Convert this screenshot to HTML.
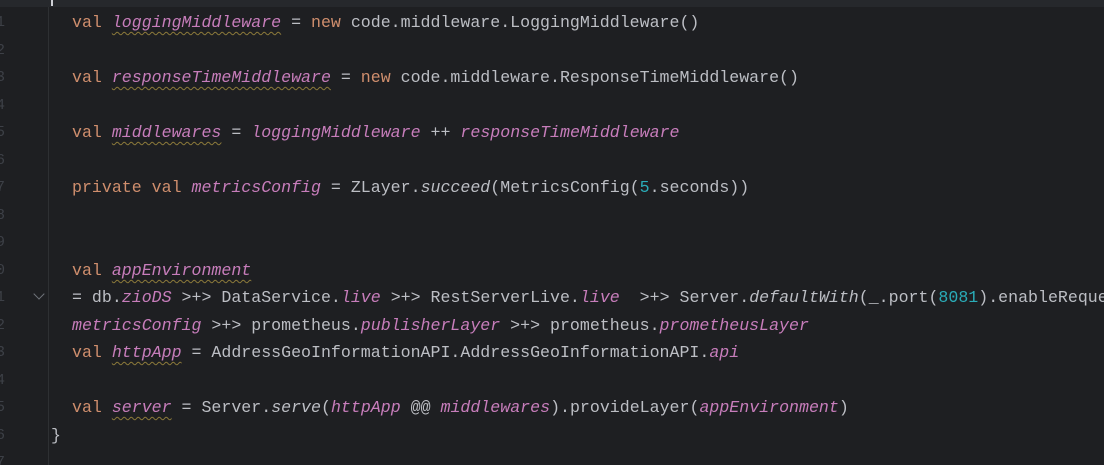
<!DOCTYPE html>
<html><head><style>
html,body{margin:0;padding:0;width:1104px;height:465px;overflow:hidden;background:#1e1f22;}
.wrap{position:absolute;left:0;top:0;width:1104px;height:465px;overflow:hidden;}
.top{position:absolute;left:0;top:0;width:1104px;height:7px;background:#26282c;}
.cur{position:absolute;left:51px;top:0;width:2px;height:6px;background:#ced0d6;}
.gl{position:absolute;left:48px;top:7px;width:1px;height:458px;background:#2e3033;}
.code{position:absolute;left:72px;top:2px;width:1032px;height:463px;overflow:hidden;font-family:"Liberation Mono",monospace;font-size:16.6px;color:#bcbec4;white-space:pre;}
.l{position:absolute;left:0;height:27.5px;line-height:27.5px;}
.k{color:#cf8e6d}
.p{color:#c77dbb;font-style:italic}
.i{font-style:italic}
.n{color:#2aacb8}
.u{text-decoration:underline wavy #8c7a3a;text-decoration-thickness:1px;text-underline-offset:4px}
.ln{position:absolute;left:-7px;font-family:"Liberation Mono",monospace;font-size:15px;color:#3d4047;width:12px;text-align:right;line-height:27.5px}
.chev{position:absolute;left:35px;top:290px;width:7px;height:7px;border-right:1.3px solid #6f737a;border-bottom:1.3px solid #6f737a;transform:rotate(45deg);}
</style></head><body><div class="wrap">
<div class="top"></div><div class="cur"></div><div class="gl"></div>
<div class="ln" style="top:9px">1</div>
<div class="ln" style="top:37px">2</div>
<div class="ln" style="top:64px">3</div>
<div class="ln" style="top:92px">4</div>
<div class="ln" style="top:119px">5</div>
<div class="ln" style="top:147px">6</div>
<div class="ln" style="top:174px">7</div>
<div class="ln" style="top:202px">8</div>
<div class="ln" style="top:229px">9</div>
<div class="ln" style="top:257px">0</div>
<div class="ln" style="top:284px">1</div>
<div class="ln" style="top:312px">2</div>
<div class="ln" style="top:339px">3</div>
<div class="ln" style="top:367px">4</div>
<div class="ln" style="top:394px">5</div>
<div class="ln" style="top:422px">6</div>
<div class="ln" style="top:449px">7</div>
<div class="chev"></div>
<div class="code">
<div class="l" style="top:7px"><span class="k">val</span> <span class="p u">loggingMiddleware</span> = <span class="k">new</span> code.middleware.LoggingMiddleware()</div>
<div class="l" style="top:62px"><span class="k">val</span> <span class="p u">responseTimeMiddleware</span> = <span class="k">new</span> code.middleware.ResponseTimeMiddleware()</div>
<div class="l" style="top:117px"><span class="k">val</span> <span class="p u">middlewares</span> = <span class="p">loggingMiddleware</span> ++ <span class="p">responseTimeMiddleware</span></div>
<div class="l" style="top:172px"><span class="k">private val</span> <span class="p">metricsConfig</span> = ZLayer.<span class="i">succeed</span>(MetricsConfig(<span class="n">5</span>.seconds))</div>
<div class="l" style="top:255px"><span class="k">val</span> <span class="p u">appEnvironment</span></div>
<div class="l" style="top:282px">= db.<span class="p">zioDS</span> &gt;+&gt; DataService.<span class="p">live</span> &gt;+&gt; RestServerLive.<span class="p">live</span>  &gt;+&gt; Server.<span class="i">defaultWith</span>(_.port(<span class="n">8081</span>).enableReque</div>
<div class="l" style="top:310px"><span class="p">metricsConfig</span> &gt;+&gt; prometheus.<span class="p">publisherLayer</span> &gt;+&gt; prometheus.<span class="p">prometheusLayer</span></div>
<div class="l" style="top:337px"><span class="k">val</span> <span class="p u">httpApp</span> = AddressGeoInformationAPI.AddressGeoInformationAPI.<span class="p">api</span></div>
<div class="l" style="top:392px"><span class="k">val</span> <span class="p u">server</span> = Server.<span class="i">serve</span>(<span class="p">httpApp</span> @@ <span class="p">middlewares</span>).provideLayer(<span class="p">appEnvironment</span>)</div>
</div>
<div style="position:absolute;left:51px;top:422px;font-family:'Liberation Mono',monospace;font-size:16.6px;color:#bcbec4;line-height:27.5px">}</div>
</div></body></html>
